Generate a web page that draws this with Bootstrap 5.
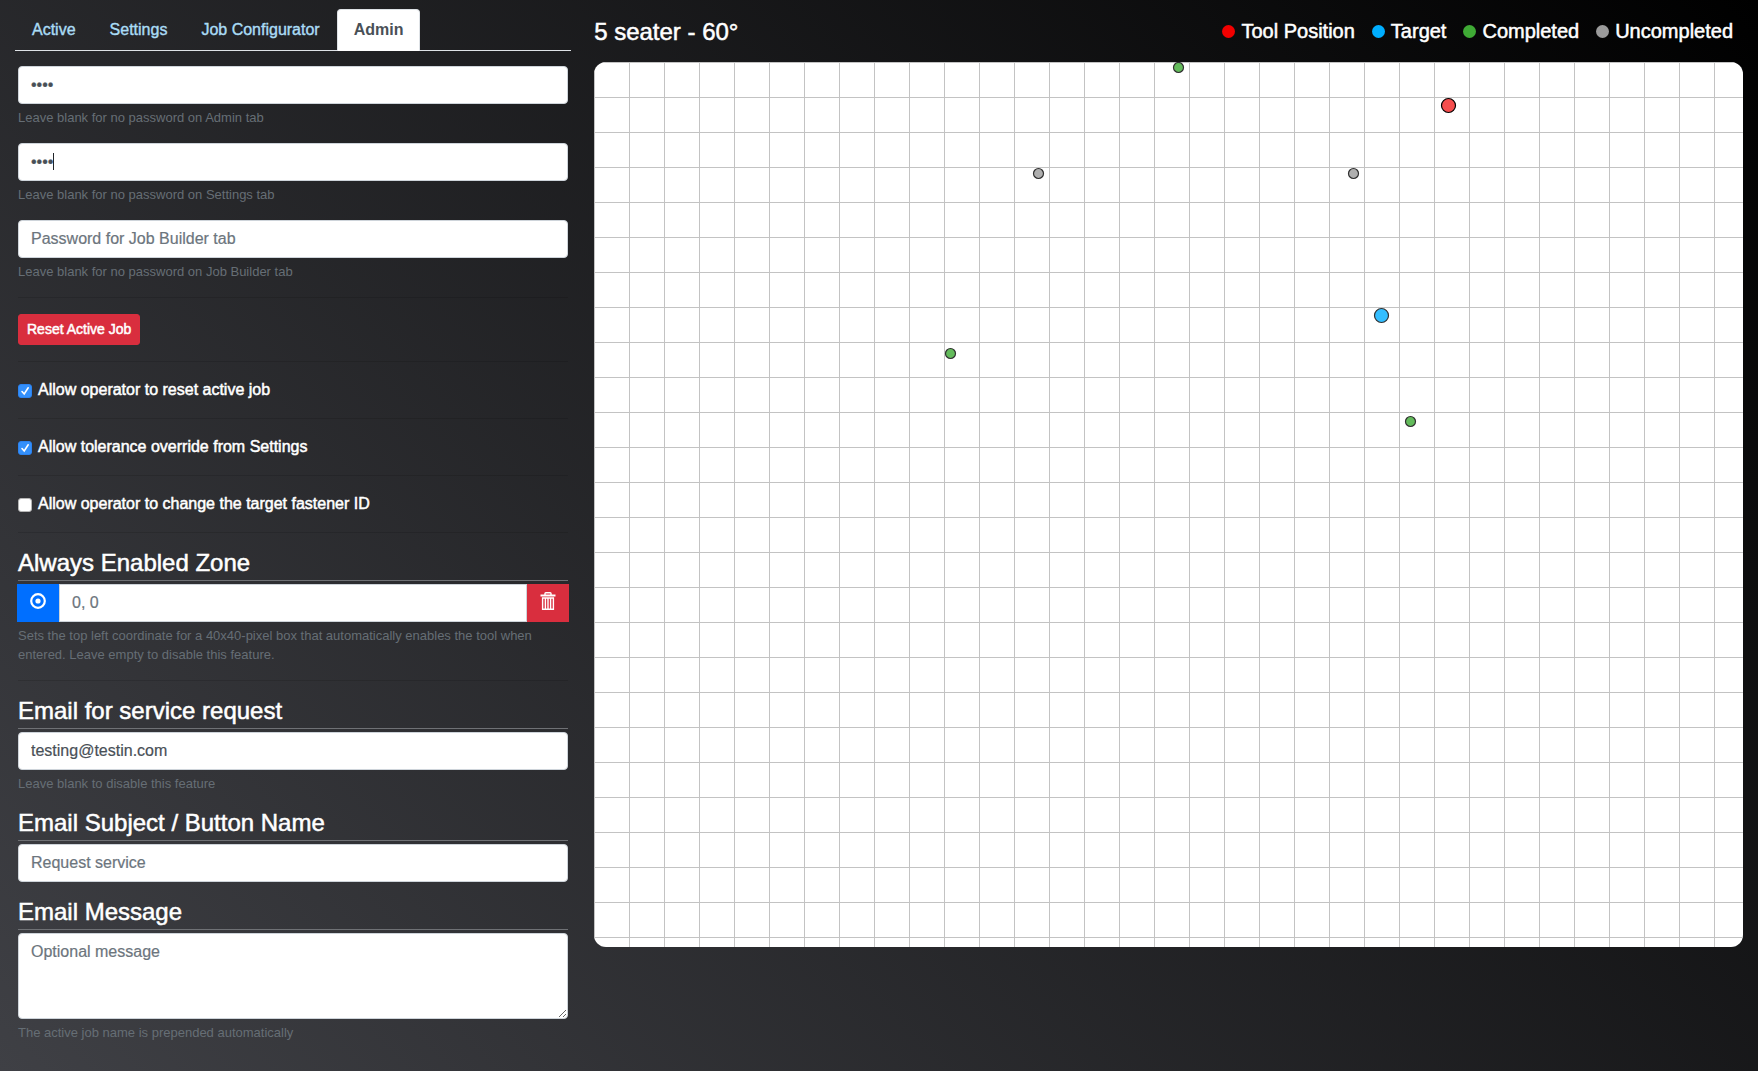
<!DOCTYPE html>
<html lang="en">
<head>
<meta charset="utf-8">
<meta name="viewport" content="width=device-width, initial-scale=1">
<title>Admin</title>
<link href="https://cdn.jsdelivr.net/npm/bootstrap@5.3.0/dist/css/bootstrap.min.css" rel="stylesheet">
<style>
  body {
    font-family: "Liberation Sans", Arial, sans-serif;
    color: #fff;
    min-height: 100vh;
    background: linear-gradient(45deg, #3f4045, #000) no-repeat;
  }
  .side-panel { flex: 0 0 33%; padding: 9px 9px 0 15px; }
  .board-panel { padding: 0 15px 0 14px; }
  .nav-tabs { --bs-nav-tabs-border-color: #dee2e6; }
  .nav-tabs .nav-link { color: #aadcf5; border-radius: 4px 4px 0 0; -webkit-text-stroke: .4px; }
  .nav-tabs .nav-link.active { color: #495057; background: #fff; border-color: #dee2e6 #dee2e6 #fff; font-weight: 700; -webkit-text-stroke: 0; }
  .admin-form { padding: 15px 3px 0; }
  .form-control, .form-control:focus { border-color: #ced4da; border-radius: 4px; color: #495057; background: #fff; box-shadow: none; -webkit-text-stroke: .2px; }
  .form-control::placeholder { color: #6c757d; }
  .hint { display: block; margin-top: 4px; font-size: 13px; line-height: 19px; color: #666e75; }
  .field { margin-bottom: 16px; }
  .caret-mark { position: absolute; left: 35px; top: 10px; width: 1px; height: 17px; background: #212529; }
  .rule { height: 1px; margin: 16px 0; background: #000; opacity: .12; border: 0; }
  .heavy { -webkit-text-stroke: .5px; }
  .btn-danger { --bs-btn-bg: #d92e3e; --bs-btn-border-color: #d92e3e; }
  .btn-primary { --bs-btn-bg: #006fff; --bs-btn-border-color: #006fff; }
  .reset-btn { border-radius: 3px; }
  .option { display: flex; align-items: center; gap: 6px; height: 24px; }
  .option input {
    appearance: none; flex: none; width: 14px; height: 14px; margin: 2px 0 0;
    border: 1px solid #b5b5b5; border-radius: 3px; background: #fff;
  }
  .option input:checked {
    border-color: #2b82f0;
    background: #3490fb url("data:image/svg+xml,%3Csvg xmlns='http://www.w3.org/2000/svg' viewBox='0 0 12 12'%3E%3Cpath d='M3 6.5 5.2 9 9.2 2.8' fill='none' stroke='white' stroke-width='1.6' stroke-linecap='round'/%3E%3C/svg%3E") center/12px no-repeat;
  }
  .group-title { font-size: 24px; line-height: 28px; margin: 0 0 3px; padding-bottom: 3px; border-bottom: 1px solid #6f7175; font-weight: 400; }
  .group-title label { display: block; }
  .zone-row { margin: 0 -1px; width: auto; }
  .zone-row .form-control, .zone-row .btn { border-radius: 0; }
  .zone-row > :not(:first-child) { margin-left: 0 !important; }
  .zone-row .btn { width: 42px; padding: 0; }
  .zone-row svg { display: block; margin: 0 auto 4px; }
  .message-box { height: 86px; }
  .board-head { height: 62px; }
  .board-head h1 { font-size: 24px; line-height: 29px; font-weight: 400; }
  .legend-list { font-size: 20px; line-height: 24px; gap: 17px; padding-right: 10px; }
  .legend-list li { display: flex; align-items: center; gap: 6px; }
  .legend-list i { width: 13px; height: 13px; border-radius: 50%; }
  .tool-dot { background: #f20000; }
  .target-dot { background: #00aeff; }
  .done-dot { background: #3faa35; }
  .open-dot { background: #9b9b9b; }
  .board { display: block; width: 100%; height: 885px; border-radius: 12px; background: #fff; }
</style>
</head>
<body>
<div class="d-flex">
  <aside class="side-panel">
    <ul class="nav nav-tabs">
      <li class="nav-item"><a class="nav-link" href="#">Active</a></li>
      <li class="nav-item"><a class="nav-link" href="#">Settings</a></li>
      <li class="nav-item"><a class="nav-link" href="#">Job Configurator</a></li>
      <li class="nav-item"><a class="nav-link active" aria-current="page" href="#">Admin</a></li>
    </ul>
    <form class="admin-form">
      <div class="field">
        <input type="password" class="form-control" aria-label="Password for Admin tab" value="1234" autocomplete="off">
        <small class="hint">Leave blank for no password on Admin tab</small>
      </div>
      <div class="field position-relative">
        <input type="password" class="form-control" aria-label="Password for Settings tab" value="1234" autocomplete="off">
        <span class="caret-mark"></span>
        <small class="hint">Leave blank for no password on Settings tab</small>
      </div>
      <div class="field">
        <input type="password" class="form-control" aria-label="Password for Job Builder tab" placeholder="Password for Job Builder tab" autocomplete="off">
        <small class="hint">Leave blank for no password on Job Builder tab</small>
      </div>
      <hr class="rule">
      <button type="button" class="btn btn-danger btn-sm reset-btn heavy">Reset Active Job</button>
      <hr class="rule">
      <div class="option"><input type="checkbox" id="allowReset" checked><label class="heavy" for="allowReset">Allow operator to reset active job</label></div>
      <hr class="rule">
      <div class="option"><input type="checkbox" id="allowTolerance" checked><label class="heavy" for="allowTolerance">Allow tolerance override from Settings</label></div>
      <hr class="rule">
      <div class="option"><input type="checkbox" id="allowTarget"><label class="heavy" for="allowTarget">Allow operator to change the target fastener ID</label></div>
      <hr class="rule">
      <div class="field">
        <h2 class="group-title heavy"><label for="zone">Always Enabled Zone</label></h2>
        <div class="input-group zone-row">
          <button type="button" class="btn btn-primary" aria-label="Set zone">
            <svg width="16" height="16" viewBox="0 0 16 16"><circle cx="8" cy="8" r="6.8" fill="none" stroke="#fff" stroke-width="2.2"/><circle cx="8" cy="8" r="2.6" fill="#fff"/></svg>
          </button>
          <input type="text" class="form-control" id="zone" placeholder="0, 0">
          <button type="button" class="btn btn-danger" aria-label="Clear zone">
            <svg width="16" height="18" viewBox="0 0 16 18" fill="none" stroke="#fff"><path d="M.5 3.5h15" stroke-width="2"/><path d="M5 3V1.6Q5 .8 5.8.8h4.4q.8 0 .8.8V3M2.6 6h10.8v11.2H2.6zM5.4 6.5V17M8 6.5V17M10.6 6.5V17" stroke-width="1.4"/></svg>
          </button>
        </div>
        <small class="hint">Sets the top left coordinate for a 40x40-pixel box that automatically enables the tool when entered. Leave empty to disable this feature.</small>
      </div>
      <hr class="rule">
      <div class="field">
        <h2 class="group-title heavy"><label for="mail">Email for service request</label></h2>
        <input type="email" class="form-control" id="mail" value="testing@testin.com">
        <small class="hint">Leave blank to disable this feature</small>
      </div>
      <div class="field">
        <h2 class="group-title heavy"><label for="subject">Email Subject / Button Name</label></h2>
        <input type="text" class="form-control" id="subject" placeholder="Request service">
      </div>
      <div>
        <h2 class="group-title heavy"><label for="message">Email Message</label></h2>
        <textarea class="form-control message-box" id="message" placeholder="Optional message"></textarea>
        <small class="hint">The active job name is prepended automatically</small>
      </div>
    </form>
  </aside>
  <main class="board-panel flex-grow-1">
    <header class="board-head d-flex align-items-center justify-content-between">
      <h1 class="m-0 heavy">5 seater - 60°</h1>
      <ul class="legend-list list-unstyled d-flex m-0 heavy">
        <li><i class="tool-dot"></i>Tool Position</li>
        <li><i class="target-dot"></i>Target</li>
        <li><i class="done-dot"></i>Completed</li>
        <li><i class="open-dot"></i>Uncompleted</li>
      </ul>
    </header>
    <svg class="board" role="img" aria-label="Fastener map">
      <defs><pattern id="cells" width="35" height="35" patternUnits="userSpaceOnUse"><path d="M0 .5H35M.5 0V35" stroke="#c3c3c3"/></pattern></defs>
      <rect width="100%" height="100%" fill="url(#cells)"/>
      <g stroke="#303030" stroke-width="1.2">
        <circle cx="584.5" cy="5.5" r="5" fill="#63bb5b"/>
        <circle cx="444.5" cy="111.5" r="5" fill="#afafaf"/>
        <circle cx="759.5" cy="111.5" r="5" fill="#afafaf"/>
        <circle cx="356.5" cy="291.5" r="5" fill="#63bb5b"/>
        <circle cx="816.5" cy="359.5" r="5" fill="#63bb5b"/>
        <circle cx="787.5" cy="253.5" r="7" fill="#33beff"/>
        <circle cx="854.5" cy="43.5" r="7" fill="#f54d4d" stroke="#000"/>
      </g>
    </svg>
  </main>
</div>
<script src="https://cdn.jsdelivr.net/npm/bootstrap@5.3.0/dist/js/bootstrap.bundle.min.js"></script>
</body>
</html>
